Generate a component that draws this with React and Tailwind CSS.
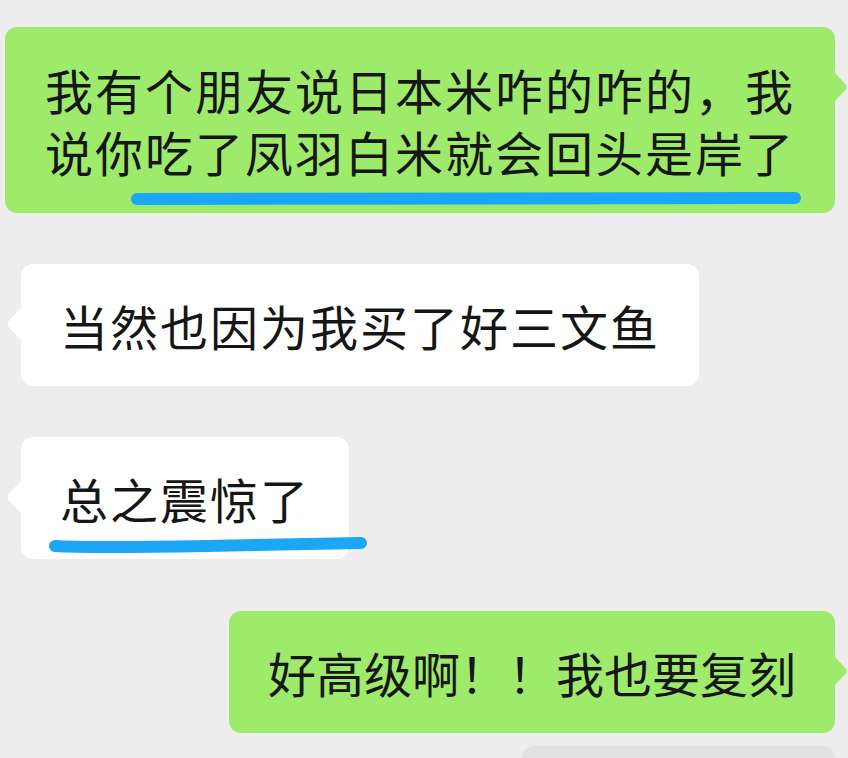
import React from 'react';

// Little pointer on the side of a chat bubble
const Tail = ({ side, color }) => {
    const left = side === 'left';
    return (
        <svg
            width="16"
            height="34"
            viewBox="0 0 16 34"
            className={left ? 'absolute left-[-15px] top-[43px]' : 'absolute right-[-13px] top-[43px]'}
        >
            <path
                d={left ? 'M16 0 L2.5 14 Q0.5 17 2.5 20 L16 34 Z' : 'M0 0 L13.5 14 Q15.5 17 13.5 20 L0 34 Z'}
                fill={color}
            />
        </svg>
    );
};

const Bubble = ({ side, children, className = '' }) => {
    const mine = side === 'right';
    return (
        <div
            className={`relative rounded-[12px] px-[39px] py-[30px] text-[48px] leading-[62px] text-[#161616] ${
                mine ? 'self-end bg-[#9eea6a]' : 'self-start bg-white'
            } ${className}`}
        >
            <Tail side={mine ? 'right' : 'left'} color={mine ? '#9eea6a' : '#ffffff'} />
            {children}
        </div>
    );
};

// Hand-drawn blue marker stroke
const Marker = ({ className, width, d }) => (
    <svg width={width} height="20" viewBox={`0 0 ${width} 20`} className={`absolute ${className}`}>
        <path d={d} stroke="#1ca7f6" strokeWidth="12" strokeLinecap="round" fill="none" />
    </svg>
);

export default function App() {
    return (
        <div
            className="flex h-[758px] w-[848px] flex-col overflow-hidden bg-[#ededed] pt-[27px]"
            style={{ fontFamily: '"Noto Sans CJK SC", "Noto Sans", sans-serif' }}
        >
            <Bubble side="right" className="mr-[13px] py-[31px] pl-[40px] pr-[40px] tracking-[2px]">
                <div className="whitespace-nowrap">我有个朋友说日本米咋的咋的，我</div>
                <div className="whitespace-nowrap">说你吃了凤羽白米就会回头是岸了</div>
                <Marker className="left-[124px] top-[162px]" width={676} d="M8 10 Q330 9 666 9" />
            </Bubble>

            <Bubble side="left" className="ml-[21px] mt-[51px] whitespace-nowrap tracking-[2px]">
                当然也因为我买了好三文鱼
            </Bubble>

            <Bubble side="left" className="ml-[21px] mt-[51px] whitespace-nowrap tracking-[2px]">
                总之震惊了
                <Marker className="left-[26px] top-[97px]" width={322} d="M8 12 Q40 14 160 12 T314 9" />
            </Bubble>

            <Bubble side="right" className="mr-[13px] mt-[52px] whitespace-nowrap tracking-normal">
                好高级啊！！我也要复刻
            </Bubble>

            <div className="mr-[13px] mt-[13px] h-[80px] w-[313px] shrink-0 self-end rounded-[12px] bg-[#e1e1e1]" />
        </div>
    );
}
